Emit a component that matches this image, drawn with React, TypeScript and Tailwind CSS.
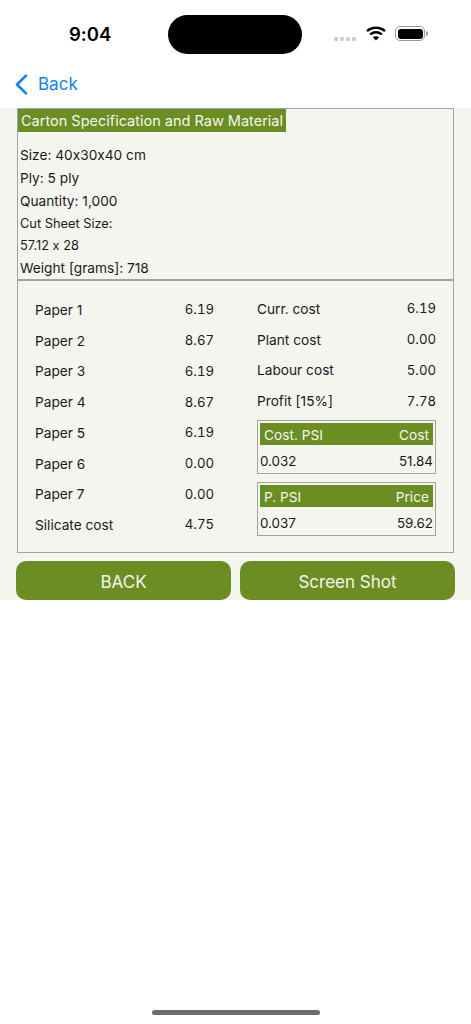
import React from 'react';

const font = { fontFamily: 'Inter, "Liberation Sans", sans-serif' };

const leftRows = [
  ['Paper 1', '6.19'],
  ['Paper 2', '8.67'],
  ['Paper 3', '6.19'],
  ['Paper 4', '8.67'],
  ['Paper 5', '6.19'],
  ['Paper 6', '0.00'],
  ['Paper 7', '0.00'],
  ['Silicate cost', '4.75'],
];

const rightRows = [
  ['Curr. cost', '6.19'],
  ['Plant cost', '0.00'],
  ['Labour cost', '5.00'],
  ['Profit [15%]', '7.78'],
];

const SummaryBox = ({ a, b, c, d }: { a: string; b: string; c: string; d: string }) => (
  <div className="h-[54px] border border-[#a3a3a3] px-[2px] pt-[2px]">
    <div className="flex h-[22px] items-center justify-between bg-[#6b8e23] pl-1 pr-[4px] pt-[3px] text-[13.7px] text-[#f5f5f0]">
      <span>{a}</span>
      <span>{b}</span>
    </div>
    <div className="flex h-[27px] items-center justify-between pt-[5px] text-[13.4px] text-[#1a1a1a]">
      <span>{c}</span>
      <span>{d}</span>
    </div>
  </div>
);

const App = () => {
  return (
    <div className="flex h-[1024px] w-[471px] flex-col overflow-hidden bg-white [font-feature-settings:'calt'_0]" style={font}>
      {/* Status bar */}
      <div className="flex h-[68px] shrink-0 items-start">
        <div className="mt-[23px] w-[168px] pl-[69px] text-[18.5px] font-semibold leading-[23px] text-black">9:04</div>
        <div className="mt-[15px] h-[39px] w-[134px] rounded-[20px] bg-black" />
        <div className="ml-[32px] mt-[26px] flex items-start">
          <div className="mt-[11px] flex gap-[2px]">
            <span className="h-[4px] w-[4px] rounded-[1px] bg-[#cfcfcf]" />
            <span className="h-[4px] w-[4px] rounded-[1px] bg-[#cfcfcf]" />
            <span className="h-[4px] w-[4px] rounded-[1px] bg-[#cfcfcf]" />
            <span className="h-[4px] w-[4px] rounded-[1px] bg-[#cfcfcf]" />
          </div>
          <svg className="ml-[10px]" width="20" height="15" viewBox="0 0 20 15" fill="none" stroke="#000" strokeWidth="2.4">
            <path d="M1 5.2C6 .6 14 .6 19 5.2" />
            <path d="M4.2 8.4C7.5 5.5 12.5 5.5 15.8 8.4" />
            <path d="M10 14.4 6.9 11.3C8.7 9.9 11.3 9.9 13.1 11.3Z" fill="#000" stroke="none" />
          </svg>
          <div className="ml-[9px] flex items-center">
            <div className="h-[15px] w-[30px] rounded-[5px] border border-[#9a9a9a] p-[1.5px]">
              <div className="h-full w-full rounded-[3px] bg-black" />
            </div>
            <div className="ml-[1px] h-[5px] w-[1.5px] rounded-r-sm bg-[#9a9a9a]" />
          </div>
        </div>
      </div>

      {/* Nav bar */}
      <div className="flex h-[40px] shrink-0 items-center pb-[8px] pl-[15px] text-[#0a84ff]">
        <svg width="13" height="21" viewBox="0 0 13 21" fill="none" stroke="#0a84ff" strokeWidth="2.6" strokeLinecap="round" strokeLinejoin="round">
          <path d="M11 1.6 2 10.5 11 19.4" />
        </svg>
        <span className="ml-[10px] text-[17px] leading-none">Back</span>
      </div>

      {/* Content */}
      <div className="flex h-[492px] shrink-0 flex-col bg-[#f5f5f0] px-[17px]">
        <div className="h-[172px] border border-[#a3a3a3]">
          <div className="flex h-[23px] w-[268px] items-center whitespace-nowrap bg-[#6b8e23] pl-[3px] text-[14.5px] text-[#f5f5f0]">
            Carton Specification and Raw Material
          </div>
          <div className="pl-[2px] pt-[12px] text-[#1a1a1a]">
            <div className="flex h-[23px] items-center text-[13.7px]">Size: 40x30x40 cm</div>
            <div className="flex h-[23px] items-center text-[13.7px]">Ply: 5 ply</div>
            <div className="flex h-[23px] items-center text-[13.7px]">Quantity: 1,000</div>
            <div className="flex h-[22px] items-center text-[12.8px]">Cut Sheet Size:</div>
            <div className="flex h-[22px] items-center text-[12.8px]">57.12 x 28</div>
            <div className="flex h-[22px] items-center text-[13.7px]">Weight [grams]: 718</div>
          </div>
        </div>

        <div className="flex h-[273px] border border-[#a3a3a3] pl-[17px] pr-[17px] pt-[14px] text-[13.7px] text-[#1a1a1a]">
          <div className="w-[179px]">
            {leftRows.map(([label, value]) => (
              <div key={label} className="flex h-[30.7px] items-center justify-between">
                <span>{label}</span>
                <span className="text-[13.2px] tabular-nums">{value}</span>
              </div>
            ))}
          </div>
          <div className="ml-[43px] -mt-[1px] flex-1">
            {rightRows.map(([label, value]) => (
              <div key={label} className="flex h-[30.7px] items-center justify-between">
                <span>{label}</span>
                <span className="text-[13.2px] tabular-nums">{value}</span>
              </div>
            ))}
            <div className="mt-[3px] flex flex-col gap-[8px]">
              <SummaryBox a="Cost. PSI" b="Cost" c="0.032" d="51.84" />
              <SummaryBox a="P. PSI" b="Price" c="0.037" d="59.62" />
            </div>
          </div>
        </div>

        <div className="-mx-[1px] mt-[8px] flex gap-[9px]">
          <button className="h-[39px] flex-1 rounded-[10px] bg-[#6b8e23] pt-[4px] text-[17px] text-[#f5f5f0]">BACK</button>
          <button className="h-[39px] flex-1 rounded-[10px] bg-[#6b8e23] pt-[4px] text-[17px] text-[#f5f5f0]">Screen Shot</button>
        </div>
      </div>

      {/* Home indicator */}
      <div className="flex flex-1 items-end justify-center pb-[9px]">
        <div className="h-[5px] w-[168px] rounded-full bg-[#6e6e6e]" />
      </div>
    </div>
  );
};

export default App;
